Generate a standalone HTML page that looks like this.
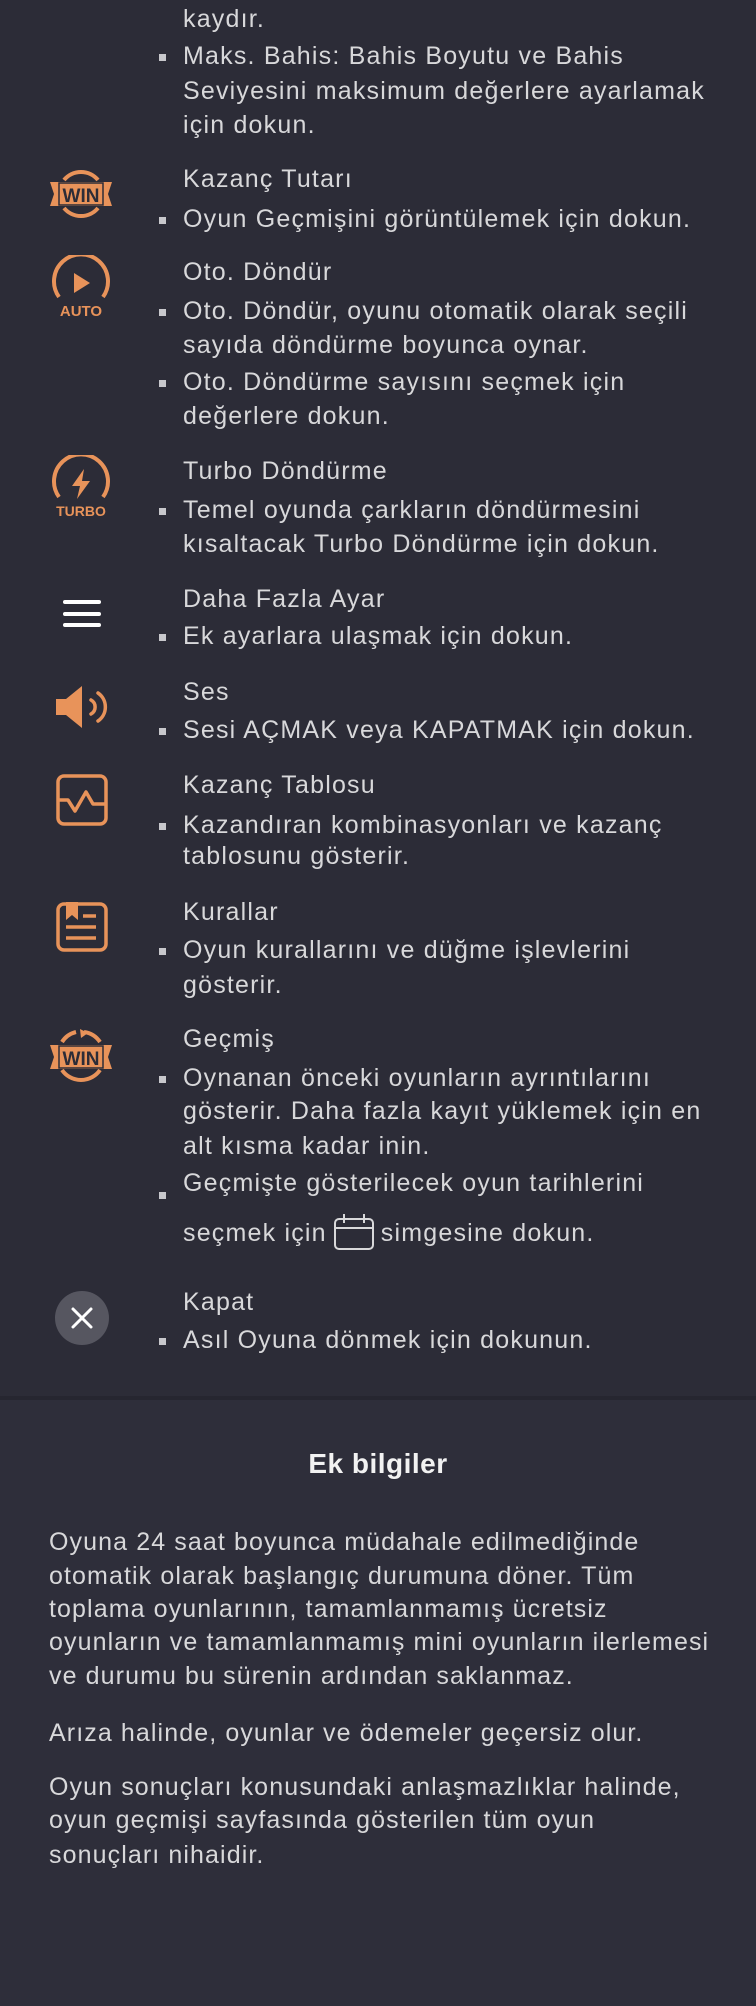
<!DOCTYPE html>
<html><head><meta charset="utf-8"><style>
html,body{margin:0;padding:0;}
body{width:756px;height:2006px;background:#2e2e3a;position:relative;overflow:hidden;font-family:"Liberation Sans","DejaVu Sans",sans-serif;color:#d8d8da;}
.top{position:absolute;left:0;top:0;width:756px;height:1396px;background:#2c2c37;}
.sep{position:absolute;left:0;top:1396px;width:756px;height:4px;background:#262630;}
.l{position:absolute;left:183px;font-size:25px;line-height:34px;height:34px;white-space:nowrap;letter-spacing:1.2px;}
.b::before{content:"";position:absolute;left:-24px;top:15px;width:7px;height:7px;background:#c8c8cc;}
.p{position:absolute;left:49px;font-size:25px;line-height:34px;white-space:nowrap;letter-spacing:1.1px;}
svg{position:absolute;}
svg.in{position:static;display:inline-block;vertical-align:-10px;margin:0 6px;}
</style></head><body>
<div class="top"></div><div class="sep"></div>

<div class="l" style="top:2px">kaydır.</div>
<div class="l b" style="top:39px">Maks. Bahis: Bahis Boyutu ve Bahis</div>
<div class="l" style="top:74px">Seviyesini maksimum değerlere ayarlamak</div>
<div class="l" style="top:108px">için dokun.</div>

<div class="l" style="top:162px">Kazanç Tutarı</div>
<div class="l b" style="top:202px">Oyun Geçmişini görüntülemek için dokun.</div>

<div class="l" style="top:255px">Oto. Döndür</div>
<div class="l b" style="top:294px">Oto. Döndür, oyunu otomatik olarak seçili</div>
<div class="l" style="top:328px">sayıda döndürme boyunca oynar.</div>
<div class="l b" style="top:365px">Oto. Döndürme sayısını seçmek için</div>
<div class="l" style="top:399px">değerlere dokun.</div>

<div class="l" style="top:454px">Turbo Döndürme</div>
<div class="l b" style="top:493px">Temel oyunda çarkların döndürmesini</div>
<div class="l" style="top:527px">kısaltacak Turbo Döndürme için dokun.</div>

<div class="l" style="top:582px">Daha Fazla Ayar</div>
<div class="l b" style="top:619px">Ek ayarlara ulaşmak için dokun.</div>

<div class="l" style="top:675px">Ses</div>
<div class="l b" style="top:713px">Sesi AÇMAK veya KAPATMAK için dokun.</div>

<div class="l" style="top:768px">Kazanç Tablosu</div>
<div class="l b" style="top:808px">Kazandıran kombinasyonları ve kazanç</div>
<div class="l" style="top:839px">tablosunu gösterir.</div>

<div class="l" style="top:895px">Kurallar</div>
<div class="l b" style="top:933px">Oyun kurallarını ve düğme işlevlerini</div>
<div class="l" style="top:968px">gösterir.</div>

<div class="l" style="top:1022px">Geçmiş</div>
<div class="l b" style="top:1061px">Oynanan önceki oyunların ayrıntılarını</div>
<div class="l" style="top:1094px">gösterir. Daha fazla kayıt yüklemek için en</div>
<div class="l" style="top:1129px">alt kısma kadar inin.</div>
<div class="l" style="top:1166px">Geçmişte gösterilecek oyun tarihlerini</div>
<div style="position:absolute;left:159px;top:1192px;width:7px;height:7px;background:#c8c8cc"></div>
<div class="l" style="top:1213px">seçmek için<svg class="in" width="42" height="38" viewBox="0 0 42 38"><rect x="2" y="6" width="38" height="30" rx="4" fill="none" stroke="#d8d8da" stroke-width="2"/><line x1="2" y1="15" x2="40" y2="15" stroke="#d8d8da" stroke-width="2"/><line x1="11" y1="1" x2="11" y2="10" stroke="#d8d8da" stroke-width="2"/><line x1="31" y1="1" x2="31" y2="10" stroke="#d8d8da" stroke-width="2"/></svg>simgesine dokun.</div>

<div class="l" style="top:1285px">Kapat</div>
<div class="l b" style="top:1323px">Asıl Oyuna dönmek için dokunun.</div>

<!-- icons -->
<svg style="left:50px;top:168px" width="62" height="52" viewBox="0 0 62 52">
<path d="M14 12 A22 22 0 0 1 48 12" fill="none" stroke="#e8935a" stroke-width="4"/>
<path d="M14 40 A22 22 0 0 0 48 40" fill="none" stroke="#e8935a" stroke-width="4"/>
<path d="M0 14 L62 14 L58 26 L62 38 L0 38 L4 26 Z" fill="#e8935a"/>
<rect x="9" y="15" width="44" height="22" fill="#e8935a" stroke="#2c2c37" stroke-width="1.5"/>
<text x="31" y="34" text-anchor="middle" font-family="Liberation Sans" font-weight="bold" font-size="19" fill="#2c2c37">WIN</text>
</svg>

<svg style="left:50px;top:255px" width="62" height="64" viewBox="0 0 62 64">
<path d="M9 42 A27 27 0 1 1 53 42" fill="none" stroke="#e8935a" stroke-width="4"/>
<path d="M24 18 L40 28 L24 38 Z" fill="#e8935a"/>
<text x="31" y="61" text-anchor="middle" font-family="Liberation Sans" font-weight="bold" font-size="15" fill="#e8935a">AUTO</text>
</svg>

<svg style="left:50px;top:455px" width="62" height="64" viewBox="0 0 62 64">
<path d="M9 42 A27 27 0 1 1 53 42" fill="none" stroke="#e8935a" stroke-width="4"/>
<path d="M34 14 L22 31 L30 31 L27 44 L40 26 L32 26 Z" fill="#e8935a"/>
<text x="31" y="61" text-anchor="middle" font-family="Liberation Sans" font-weight="bold" font-size="14" fill="#e8935a">TURBO</text>
</svg>

<svg style="left:63px;top:600px" width="38" height="28" viewBox="0 0 38 28"><rect x="0" y="0" width="38" height="4" rx="2" fill="#fff"/><rect x="0" y="12" width="38" height="4" rx="2" fill="#fff"/><rect x="0" y="23" width="38" height="4" rx="2" fill="#fff"/></svg>

<svg style="left:54px;top:685px" width="56" height="44" viewBox="0 0 56 44">
<path d="M2 14 L12 14 L28 1 L28 43 L12 30 L2 30 Z" fill="#e8935a" stroke-linejoin="round"/>
<path d="M37 15 A8 8 0 0 1 37 29" fill="none" stroke="#e8935a" stroke-width="3.5" stroke-linecap="round"/>
<path d="M44 8 A17 17 0 0 1 44 36" fill="none" stroke="#e8935a" stroke-width="3.5" stroke-linecap="round"/>
</svg>

<svg style="left:56px;top:774px" width="52" height="52" viewBox="0 0 52 52">
<rect x="2" y="2" width="48" height="48" rx="6" fill="none" stroke="#e8935a" stroke-width="3.5"/>
<path d="M3 26 L12 26 L19 37 L30 18 L37 30 L49 30" fill="none" stroke="#e8935a" stroke-width="3.5" stroke-linejoin="round"/>
</svg>

<svg style="left:56px;top:900px" width="52" height="52" viewBox="0 0 52 52">
<rect x="2" y="4" width="48" height="46" rx="6" fill="none" stroke="#e8935a" stroke-width="3.5"/>
<path d="M10 2 L22 2 L22 20 L16 15 L10 20 Z" fill="#e8935a"/>
<line x1="27" y1="16" x2="40" y2="16" stroke="#e8935a" stroke-width="3.5"/>
<line x1="10" y1="27" x2="40" y2="27" stroke="#e8935a" stroke-width="3.5"/>
<line x1="10" y1="38" x2="40" y2="38" stroke="#e8935a" stroke-width="3.5"/>
</svg>

<svg style="left:50px;top:1028px" width="62" height="56" viewBox="0 0 62 56">
<path d="M12 14 A23 23 0 0 1 26 4" fill="none" stroke="#e8935a" stroke-width="4"/>
<path d="M34 4 A23 23 0 0 1 50 14" fill="none" stroke="#e8935a" stroke-width="4"/>
<path d="M30 1 L38 5 L31 10 Z" fill="#e8935a"/>
<path d="M12 42 A23 23 0 0 0 50 42" fill="none" stroke="#e8935a" stroke-width="4"/>
<path d="M0 17 L62 17 L58 29 L62 41 L0 41 L4 29 Z" fill="#e8935a"/>
<rect x="9" y="18" width="44" height="22" fill="#e8935a" stroke="#2c2c37" stroke-width="1.5"/>
<text x="31" y="37" text-anchor="middle" font-family="Liberation Sans" font-weight="bold" font-size="19" fill="#2c2c37">WIN</text>
</svg>

<svg style="left:55px;top:1291px" width="54" height="54" viewBox="0 0 54 54">
<circle cx="27" cy="27" r="27" fill="#565660"/>
<path d="M18 18 L36 36 M36 18 L18 36" stroke="#fff" stroke-width="3" stroke-linecap="round"/>
</svg>

<div style="position:absolute;left:0;width:756px;top:1446px;text-align:center;font-size:28px;font-weight:bold;color:#f2f2f2;line-height:36px;letter-spacing:0.5px">Ek bilgiler</div>

<div class="p" style="top:1525px">Oyuna 24 saat boyunca müdahale edilmediğinde</div>
<div class="p" style="top:1559px">otomatik olarak başlangıç durumuna döner. Tüm</div>
<div class="p" style="top:1592px">toplama oyunlarının, tamamlanmamış ücretsiz</div>
<div class="p" style="top:1625px">oyunların ve tamamlanmamış mini oyunların ilerlemesi</div>
<div class="p" style="top:1659px">ve durumu bu sürenin ardından saklanmaz.</div>
<div class="p" style="top:1716px">Arıza halinde, oyunlar ve ödemeler geçersiz olur.</div>
<div class="p" style="top:1770px">Oyun sonuçları konusundaki anlaşmazlıklar halinde,</div>
<div class="p" style="top:1803px">oyun geçmişi sayfasında gösterilen tüm oyun</div>
<div class="p" style="top:1838px">sonuçları nihaidir.</div>
</body></html>
